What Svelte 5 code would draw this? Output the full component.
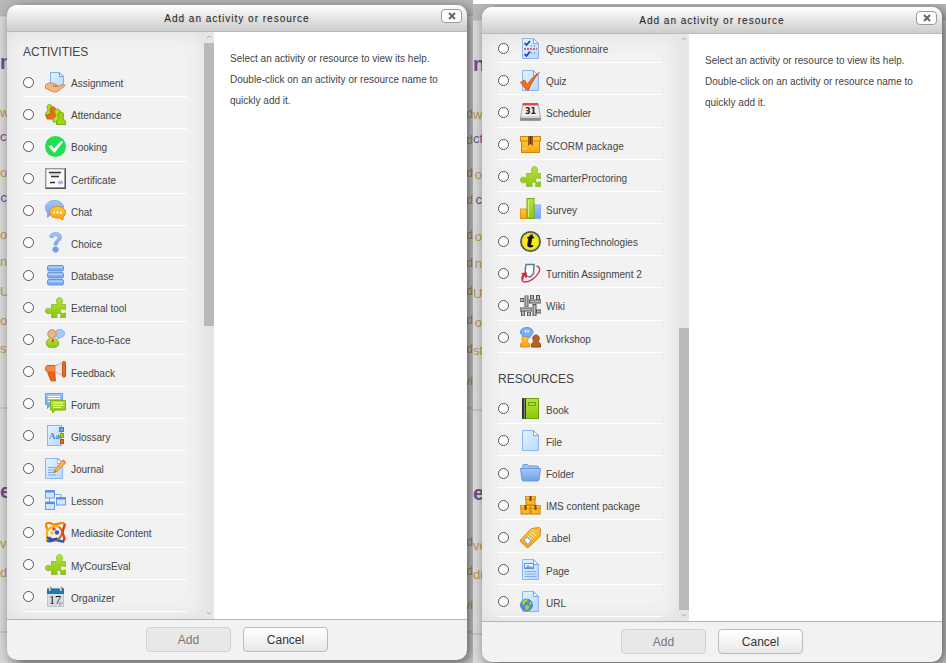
<script>
	// Course page text that shows in the gaps around each dialog
	const leftEdge = [
		{ text: 'n', top: 50, kind: 'heading' },
		{ text: 'w', top: 105 },
		{ text: 'ct', top: 129, kind: 'visited' },
		{ text: 'o', top: 165 },
		{ text: 'c', top: 190, kind: 'visited' },
		{ text: 'o', top: 227 },
		{ text: 'n', top: 254 },
		{ text: 'U', top: 284 },
		{ text: 'o', top: 313 },
		{ text: 'st', top: 341 },
		{ text: 'e', top: 479, kind: 'heading' },
		{ text: 've', top: 536 },
		{ text: 'di', top: 565 }
	];
	const rightEdge = [
		{ text: 'd', top: 106 },
		{ text: 'd', top: 132 },
		{ text: 'd', top: 165 },
		{ text: 'd', top: 192 },
		{ text: 'd', top: 227 },
		{ text: 'd', top: 255 },
		{ text: 'd', top: 283 },
		{ text: 'd', top: 312 },
		{ text: 'd', top: 341 },
		{ text: 'vi', top: 373 },
		{ text: 'd', top: 534 },
		{ text: 'd', top: 563 },
		{ text: 'vi', top: 597 }
	];

	const dialogs = [
		{
			id: 'top',
			sections: [
				{
					title: 'ACTIVITIES',
					items: [
						['assignment', 'Assignment'],
						['attendance', 'Attendance'],
						['booking', 'Booking'],
						['certificate', 'Certificate'],
						['chat', 'Chat'],
						['choice', 'Choice'],
						['database', 'Database'],
						['puzzle', 'External tool'],
						['face', 'Face-to-Face'],
						['feedback', 'Feedback'],
						['forum', 'Forum'],
						['glossary', 'Glossary'],
						['journal', 'Journal'],
						['lesson', 'Lesson'],
						['mediasite', 'Mediasite Content'],
						['puzzle', 'MyCoursEval'],
						['organizer', 'Organizer']
					]
				}
			]
		},
		{
			id: 'bottom',
			sections: [
				{
					title: '',
					items: [
						['questionnaire', 'Questionnaire'],
						['quiz', 'Quiz'],
						['scheduler', 'Scheduler'],
						['scorm', 'SCORM package'],
						['puzzle', 'SmarterProctoring'],
						['survey', 'Survey'],
						['turning', 'TurningTechnologies'],
						['turnitin', 'Turnitin Assignment 2'],
						['wiki', 'Wiki'],
						['workshop', 'Workshop']
					]
				},
				{
					title: 'RESOURCES',
					items: [
						['book', 'Book'],
						['file', 'File'],
						['folder', 'Folder'],
						['ims', 'IMS content package'],
						['label', 'Label'],
						['page', 'Page'],
						['url', 'URL']
					]
				}
			]
		}
	];

	let selected = $state({ top: '', bottom: '' });
</script>

{#snippet sheet()}
	<path d="M2.5.5h11l5 5v15h-16z" fill="url(#sheet)" stroke="#8db4ee" />
	<path d="M13.5.5v5h5z" fill="#eef7ff" stroke="#7fa9ea" />
{/snippet}

{#snippet person(fill, stroke)}
	<path
		d="M5 1c2 0 3.200 1.500 3.200 3.500 0 1.500-.8 2.300-1 3 .2 1 2.300 1 2.300 3.500v2h-9v-2c0-2.500 2.100-2.500 2.300-3.500-.2-.7-1-1.500-1-3C1.800 2.500 3 1 5 1z"
		{fill}
		{stroke}
	/>
{/snippet}

{#snippet box()}
	<rect x=".5" y="2.500" width="9" height="6.500" fill="#ffb51c" stroke="#c97b08" />
	<rect x="0" y=".5" width="10" height="2.500" fill="#ffc63c" stroke="#c97b08" stroke-width=".7" />
	<path d="M4 0h2v5H4z" fill="#80400c" />
{/snippet}

{#snippet icon(name)}
	<svg class="icon" viewBox="0 0 21 21" aria-hidden="true">
		{#if name === 'assignment'}
			<path d="M5.500.5h9l4 4v10h-13z" fill="url(#sheet)" stroke="#7fb0ee" />
			<path d="M14.500.5v4h4z" fill="#eef7ff" stroke="#6ea0e8" />
			<path
				d="M.5 13c2-2 4-2.500 6-2l5 1.500c1 .5.500 1.600-.5 1.600H8l5 .4 5-2c1.600-.3 2.700.7 1.500 1.700l-6 4.500c-2 1.500-4 1.700-6 1l-3-1.500-4-2z"
				fill="#f1b981"
				stroke="#b87a42"
				stroke-width=".8"
			/>
		{:else if name === 'attendance'}
			<path d="M4.500.5c2 0 3 1.500 2.500 3.500L6.500 6 10 8v5H1l-.5-4L3 7 2 3.500C2 1.500 3 .5 4.500.5z" fill="#a8d818" stroke="#6fa60a" stroke-width=".8" />
			<path d="M8 3c2 0 3 1.500 2.500 3.500L10 9l3 2v4H2v-1.500l-1-2 2-.5 3-1.500L5.500 6C5.500 4 6.500 3 8 3z" fill="#f26a22" stroke="#c44708" stroke-width=".8" />
			<path d="M12 5c2.500 0 3.500 1.500 3 4l-1 2 4 2v5H8v-3l3-3-1.500-4C9.500 6 10.500 5 12 5z" fill="#b4e02c" stroke="#6fa60a" stroke-width=".8" />
			<path d="M15.500 8c2.500 0 3.500 1.500 3 4l-.8 2.500L20.500 17v3.500h-9V17l2.500-2.500-1-3C13 9 14 8 15.500 8z" fill="#a4d414" stroke="#659a08" stroke-width=".8" />
		{:else if name === 'booking'}
			<circle cx="10.500" cy="10.500" r="10.500" fill="#1fe04f" />
			<path d="M3.500 10.500 6.500 9l2.500 3.500L16 5l2 1-8.500 11z" fill="#fff" />
		{:else if name === 'certificate'}
			<rect x=".7" y=".7" width="19.600" height="19.600" fill="#fafafa" stroke="#999" stroke-width="1.400" />
			<path d="M20.300.7v19.600H.7" fill="none" stroke="#555" stroke-width="1.400" />
			<path d="M4 4.500h12M6 8.500h8M5 14.500h5" stroke="#333" stroke-width="1.300" />
			<path d="M5 6h10" stroke="#999" stroke-width=".7" />
			<ellipse cx="15.500" cy="14.500" rx="2.700" ry="2" fill="#b9b2e8" />
		{:else if name === 'chat'}
			<path d="M9.500.5c5 0 9 3 9 7s-4 7-9 7l-4 .2-3 3 .2-4.700C1.200 11.500.5 9.500.5 7.500c0-4 4-7 9-7z" fill="url(#blue)" stroke="#7ea9ea" />
			<path d="M12.500 6.500c4.500 0 8 2.500 8 6 0 2-1 3.500-2.500 4.500v3L15 18H12.500c-4.500 0-8-2.500-8-5.500 0-3.500 3.500-6 8-6z" fill="url(#gold)" stroke="#e88c05" />
			<path d="M8 11.500h2v2H8zM11.500 11.500h2v2h-2zM15 11.500h2v2h-2z" fill="#fff" />
		{:else if name === 'choice'}
			<path d="M4.500 5c.5-3 3-4.500 6-4.500 3.500 0 6 2 6 4.800 0 3.500-4 4-4.500 7.700h-3c0-4.500 4-5 4-7.300 0-1.200-1-2-2.500-2S8.200 4.500 8 6z" fill="url(#blue)" stroke="#7ea9ea" stroke-width=".8" />
			<circle cx="10.500" cy="17.500" r="2.800" fill="#6d9de6" stroke="#85b0f0" />
		{:else if name === 'database'}
			{#each [0.5, 7.5, 14.5] as y}
				<rect x="2.500" {y} width="16" height="5.500" rx="1.500" fill="url(#blue)" stroke="#6796e2" />
				<path d="M4 {y + 2}h13" stroke="#b4d0fa" />
			{/each}
		{:else if name === 'puzzle'}
			<path
				d="M6.500 7.500H12c.8-.5-.5-1.500-.5-3.500 0-2 1.200-3.500 3-3.500s3 1.500 3 3.500c0 2-1.300 3-.5 3.500h3.500v5c-.5.800-1.300-.5-3-.5-1.500 0-2 1-2 2.200 0 1.300.7 2.300 2 2.300 1.500 0 2.500-1 3-.5v4.500h-5c-.5-.7.600-1.500.3-2.800-.2-1-1-1.500-2-1.500s-2 .6-2 1.700c0 1.100 1 2 .4 2.600H6.500V16c-.7-.5-1.500.8-3 .8C1.500 16.800.5 15.600.5 14s1-2.800 3-2.800c1.500 0 2.300 1.300 3 .6z"
				fill="url(#green)"
				stroke="#84b92a"
				stroke-width=".8"
			/>
		{:else if name === 'face'}
			<path d="M14.500.5c3 0 5 1.500 5 4 0 2-1.500 3.500-4 4L13 10V8c-2-.5-3-2-3-3.500 0-2.500 2-4 4.500-4z" fill="#a5cbfa" stroke="#7eaef0" />
			<path d="M1.500 15c0-4 2-6 6-6s6 2 6 6c0 2.500-3 3.500-6 3.500s-6-1-6-3.500z" fill="url(#green)" stroke="#76ad18" />
			<path d="M5 9h5l-2 5z" fill="#f6f6f6" />
			<path d="M7 9.500h1.500l.7 2-1.200 3-1.500-3z" fill="#e04f18" />
			<circle cx="7" cy="5" r="4.200" fill="#e6b884" stroke="#c28b54" />
		{:else if name === 'feedback'}
			<path d="M3 9h7v4l.5 7H6c-1-2-2-5-3-7z" fill="#e9631a" stroke="#c74b0c" stroke-width=".7" />
			<path d="M3 4.500h9V11H3C1.500 11 .5 9.500.5 7.700S1.500 4.500 3 4.500z" fill="#f58a45" stroke="#d95913" />
			<path d="M10.500 4.500 18 1.500v13l-7.500-3z" fill="#e4e4e4" stroke="#bbb" />
			<rect x="17.500" y=".5" width="3" height="15.500" rx="1" fill="#ee6a20" stroke="#cf500f" />
		{:else if name === 'forum'}
			<path d="M.5.500h17v11h-12l-3 4v-4h-2z" fill="url(#blue)" stroke="#6f9be2" />
			<path d="M3 3.500h12M3 5.500h12M3 8.500h3" stroke="#fff" />
			<path d="M5.500 7.500h15v9.500H10l-2.500 3V17h-2z" fill="url(#green)" stroke="#7db50d" />
			<path d="M8 10h10M8 12.500h10M8 14.500h8" stroke="#eaffb0" />
		{:else if name === 'glossary'}
			<rect x="2.500" y=".5" width="14" height="20" fill="url(#sheet)" stroke="#8db4ee" />
			<rect x="14.500" y="2.500" width="4" height="4" fill="#6fa2ee" stroke="#4a7dcc" />
			<rect x="15.500" y="8.500" width="3" height="4" fill="#9bd818" stroke="#74a80e" />
			<rect x="15.500" y="14.500" width="3" height="4" fill="#f26a1c" stroke="#c74a08" />
			<text x="4" y="14" class="serif" font-size="9" font-weight="bold" fill="#4a7fd4">Aa</text>
		{:else if name === 'journal'}
			<path d="M.5.500h13l4 4v16H.5z" fill="url(#sheet)" stroke="#8db4ee" />
			<path d="M12.500.500v5h5z" fill="#fff" stroke="#8db4ee" />
			<path d="M3 9.500h8M3 12h7M3 14.500h7M3 17h8" stroke="#7fa7e2" />
			<path d="M17.500 2.500 20.500 5 12.500 13l-3.500 1.500 1.500-3.500z" fill="#ffb347" stroke="#c87618" stroke-width=".8" />
			<path d="m17.500 2.500 1-1 2.500 2.500-.8 1z" fill="#ee6a50" />
			<path d="m9 14.500.6-1.500 1 .8z" fill="#333" />
		{:else if name === 'lesson'}
			<path d="M9 4.500h7V8M4.500 7v5" stroke="#83a9df" fill="none" />
			{#each [[0.5, 0.5], [11.5, 7.5], [0.5, 12]] as [x, y]}
				<rect {x} {y} width="9" height="7.500" fill="#cbe6fc" stroke="#6c9be6" />
				<path d="M{x} {y + 1}h9" stroke="#5b8de0" stroke-width="2" />
			{/each}
		{:else if name === 'mediasite'}
			<path d="M3 8C-1 2 2-1 7 2c5 2 8-2 12-1" fill="none" stroke="#f28a10" stroke-width="2.400" />
			<path d="M19.500 1.500c1 4-4 7-1 12 1.500 3 1 5-1 6" fill="none" stroke="#dd3a1a" stroke-width="2.400" />
			<path d="M1 19c3-3-1-8 2-11 3-4 8-5 11-3" fill="none" stroke="#f6b51c" stroke-width="2.200" />
			<path d="M2 18.500c4 2 6-1 9-.5 3 0 5 2 8 1.500" fill="none" stroke="#2a5cc0" stroke-width="2.600" />
			<path d="M4 15c4 4 10 3 12-1 2-3 1-7-2-9" fill="none" stroke="#e65a18" stroke-width="2" />
			<path d="M2 15c4 4 8 3 10 1" fill="none" stroke="#204ca8" stroke-width="1.800" />
			<circle cx="9" cy="7" r="1.700" fill="#e64218" />
			<circle cx="12" cy="10.500" r="2.200" fill="#2a5cc0" />
			<circle cx="7" cy="11" r="1.700" fill="#f9bd18" />
		{:else if name === 'organizer'}
			<rect x="2.500" y="2.500" width="16" height="18" fill="#dcdcdc" stroke="#c5c5c5" />
			<path d="M2 2.500h17V8H2z" fill="#177bb0" />
			<path d="M5 0v5M16 0v5" stroke="#ddd" stroke-width="2" />
			<path d="M6 1v4M17 1v4" stroke="#555" stroke-width=".8" />
			<path d="M14 20.500v-4h4.500z" fill="#aaa" />
			<text x="10" y="18" class="serif" font-size="12" text-anchor="middle" fill="#111">17</text>
		{:else if name === 'questionnaire'}
			{@render sheet()}
			<path d="m4.500 5 2 2 3.500-4M4.500 16l2 2L10 13.500" fill="none" stroke="#2b36c4" stroke-width="1.700" />
			<path d="M4 11h13" stroke="#e23a4a" stroke-width="1.500" stroke-dasharray="2 1" />
			<path d="M11 8h6M11 15h6" stroke="#4a62c8" stroke-dasharray="1 2" />
		{:else if name === 'quiz'}
			{@render sheet()}
			<path d="M.5 12.500 4.500 10l3 4.500C10.500 9 15 5 19.500 2.500c-4 4-8 10-11 17.500H6.500c-2-2.500-3.500-5-6-7.500z" fill="#f36f21" stroke="#bf4a0b" stroke-width=".8" />
		{:else if name === 'scheduler'}
			<path d="m3 1.500h15l2.500 14v3h-20v-3z" fill="#ededed" stroke="#aaa" />
			<path d="M.5 15h20v3.500h-20z" fill="#8b8b8b" />
			<path d="M1.500 14h18l.5 2H1z" fill="#d4d4d4" />
			<path d="M3 1h15v2.500H2.500z" fill="#ea4646" />
			<text x="10.500" y="11.500" class="sans" font-size="8" font-weight="bold" text-anchor="middle" fill="#222">31</text>
		{:else if name === 'scorm'}
			<rect x="1.500" y="6.500" width="18" height="12" fill="url(#gold)" stroke="#cf860b" />
			<rect x=".5" y="2.500" width="20" height="4.500" fill="#ffc437" stroke="#cf860b" />
			<path d="M8 2h5v10l-2.500-2L8 12z" fill="#9b5714" />
			<path d="M10 2h1v8h-1z" fill="#603008" />
			<path d="M3 14.500h4" stroke="#ffe185" />
		{:else if name === 'survey'}
			<rect x=".5" y="11" width="6.500" height="9.500" fill="url(#gold)" stroke="#e79a18" />
			<rect x="14" y="7" width="6.500" height="13.500" fill="url(#blue)" stroke="#84aeee" />
			<rect x="7" y=".5" width="7" height="20" fill="url(#green)" stroke="#79ae0e" />
			<path d="M8.500 2v17" stroke="#d2f277" />
		{:else if name === 'turning'}
			<circle cx="10.500" cy="10.500" r="9.600" fill="#f8ec18" stroke="#555" stroke-width="1.800" />
			<circle cx="10.500" cy="10.500" r="8.200" fill="none" stroke="#d8cf3a" />
			<text x="10" y="16" class="serif" font-size="21" font-weight="bold" font-style="italic" text-anchor="middle" fill="#111" stroke="#111">t</text>
		{:else if name === 'turnitin'}
			<path d="M6 1.500h8l-.5 9-3 3.500-2.500-.5-3-1L5.500 5z" fill="#fff" stroke="#527e9c" stroke-width="1.500" />
			<path d="M16.500 3c3.500.5 4 3.500 2 7-3 5-9 9-13.500 9-3 0-3.500-2-2.500-5" fill="none" stroke="#e22a44" stroke-width="1.300" />
			<path d="m1 10 6-.5-.5 6z" fill="#e91c36" />
			<path d="M4 11.500c-1.500 1.500-2 3.500-1 5" stroke="#e91c36" fill="none" stroke-width="2" />
		{:else if name === 'wiki'}
			<g fill="none" stroke="#555" stroke-width="4">
				<path d="M6.500.5V12M14.500 9v12M0 14.500h12M9 6.500h12M3 21v-5M18 0v5M0 5h4M16 16.500h5M12 0v4M9 17v4" />
			</g>
			<g fill="none" stroke="#b9b9b9" stroke-width="2">
				<path d="M6.500 1v10.500M14.500 10v10.500M.5 14.500h11M10 6.500h10.500M3 20.500v-4M18 1v3.500M.5 5h3M17 16.500h3.500M12 .5v3M9 17.500v3" />
			</g>
		{:else if name === 'workshop'}
			<g transform="translate(0 7)">{@render person('url(#gold)', '#dc920e')}</g>
			<g transform="translate(11 7)">{@render person('#b8641e', '#8c470f')}</g>
			<path d="M7 .5c3.500 0 6 2 6 4.500 0 1.800-1.200 3.300-3 4v2L8 9.500C3.500 10 .5 8 .5 5S3.500.5 7 .5z" fill="#7faef2" stroke="#6294e2" />
			<path d="M5.500 3v2.500M8 3v2.500" stroke="#fff" stroke-width="1.300" />
		{:else if name === 'book'}
			<rect x="5" y=".5" width="13.500" height="20" fill="url(#green)" stroke="#6f9f0c" />
			<path d="M2 0h4v21H2z" fill="#333" />
			<path d="M4 0h1v21H4z" fill="#888" />
			<rect x="8.500" y="4.500" width="7" height="3" fill="none" stroke="#6fa40e" />
		{:else if name === 'file'}
			{@render sheet()}
		{:else if name === 'folder'}
			<path d="M2.500 3.500v-1l1-1h4l1.500 1.500h8.500l1 1V8h-16z" fill="#9dc0f5" stroke="#7199dc" />
			<path d="M.5 5.500h20l-1.500 11.500-1 1H3l-1-1z" fill="url(#blue)" stroke="#6c98e2" />
		{:else if name === 'ims'}
			<g transform="translate(5.500 1)">{@render box()}</g>
			<g transform="translate(.5 10)">{@render box()}</g>
			<g transform="translate(10.500 10)">{@render box()}</g>
		{:else if name === 'label'}
			<path d="m.5 13 11-11.500 8-1 1 1-.5 8L8.500 20.500H7L.5 14.500z" fill="url(#gold)" stroke="#d18a10" />
			<path d="m4 13 3-3 4 4-3 3.500z" fill="#fff" stroke="#6ea0e0" />
			<path d="m8 9 4 4M10 7l4 4M12 5l4 4" stroke="#ffeab0" />
			<circle cx="17.500" cy="3.500" r="1.300" fill="#fff" stroke="#c47d0c" stroke-width=".7" />
		{:else if name === 'page'}
			{@render sheet()}
			<rect x="4.500" y="4.500" width="9" height="5" fill="#e8f6ff" stroke="#5f93e0" />
			<path d="m5 9 3-3 2 2 1.500-1 1.500 2z" fill="#6b9de8" />
			<path d="M4.500 12.500h12M4.500 15h12M4.500 17.500h12" stroke="#86aee8" />
		{:else if name === 'url'}
			{@render sheet()}
			<circle cx="6.500" cy="14" r="6" fill="#5289dc" stroke="#3e74c8" stroke-width=".8" />
			<path d="M2 11c1.500-2 3.500-3 6-2.500l-1 2-2 .5v2l-2 1zM6 14l3.500 1-1 3-2 1.500L5 16zM9.500 10.500l2 1v3l-2-1.500z" fill="#a3dc22" />
		{/if}
	</svg>
{/snippet}

{#snippet strip(side, fragments)}
	<div class="strip {side}" aria-hidden="true">
		{#each fragments as f}
			<span class={f.kind} style="top: {f.top}px">{f.text}</span>
		{/each}
	</div>
{/snippet}

<svg class="defs" aria-hidden="true">
	<defs>
		<linearGradient id="sheet" x1="0" y1="0" x2="1" y2="1">
			<stop offset="0" stop-color="#e2f3fe" />
			<stop offset="1" stop-color="#b5dafb" />
		</linearGradient>
		<linearGradient id="blue" x1="0" y1="0" x2="0" y2="1">
			<stop offset="0" stop-color="#a5c8fa" />
			<stop offset="1" stop-color="#709fe9" />
		</linearGradient>
		<linearGradient id="gold" x1="0" y1="0" x2="0" y2="1">
			<stop offset="0" stop-color="#ffc93e" />
			<stop offset="1" stop-color="#fba20c" />
		</linearGradient>
		<linearGradient id="green" x1="0" y1="0" x2="0" y2="1">
			<stop offset="0" stop-color="#b6e33a" />
			<stop offset="1" stop-color="#8cc80c" />
		</linearGradient>
	</defs>
</svg>

<main>
	{#each dialogs as dialog}
		<div class="scene {dialog.id}">
			{@render strip('left', leftEdge)}
			{#if dialog.id === 'top'}
				{@render strip('right', rightEdge)}
			{/if}
			<section class="dialog" role="dialog" aria-labelledby="title-{dialog.id}">
				<header>
					<h1 id="title-{dialog.id}">Add an activity or resource</h1>
					<button class="close" aria-label="Close">
						<svg viewBox="0 0 8 8"><path d="m1 1 6 6M7 1 1 7" /></svg>
					</button>
				</header>

				<div class="body">
					<div class="chooser">
						{#each dialog.sections as section}
							{#if section.title}
								<h2>{section.title}</h2>
							{/if}
							{#each section.items as [name, text]}
								<label class="option">
									<input
										type="radio"
										name="module-{dialog.id}"
										value={text}
										bind:group={selected[dialog.id]}
									/>
									{@render icon(name)}
									<span>{text}</span>
								</label>
							{/each}
						{/each}
					</div>
					<div class="scrollbar" aria-hidden="true">
						<svg viewBox="0 0 8 5"><path d="m1 4 3-3 3 3" /></svg>
						<div class="track"><div class="thumb"></div></div>
						<svg viewBox="0 0 8 5"><path d="m1 1 3 3 3-3" /></svg>
					</div>
					<p class="help">
						Select an activity or resource to view its help. Double-click on an activity or resource
						name to quickly add it.
					</p>
				</div>

				<footer>
					<button disabled={!selected[dialog.id]}>Add</button>
					<button>Cancel</button>
				</footer>
			</section>
		</div>
	{/each}
</main>

<style>
	:global(body) {
		background: #fff;
		font-family: 'Liberation Sans', Arial, sans-serif;
		font-size: 10px;
		color: #444;
	}

	main {
		display: flex;
		min-height: 100vh;
	}

	.defs {
		position: absolute;
		width: 0;
		height: 0;
	}

	.scene {
		position: relative;
		flex: 1;
		display: flex;
		box-sizing: border-box;
		overflow: hidden;
		background: linear-gradient(#b9b9b9 16px, #dadada 17px);
	}

	.scene.top {
		padding: 5px 6px 3px 7px;
	}

	.scene.bottom {
		margin-top: 4px;
		padding: 3px 4px 1px 9px;
	}

	/* Page text behind the dialog */
	.strip {
		position: absolute;
		top: 0;
		bottom: 0;
		background:
			linear-gradient(#c6c6c6, #c6c6c6) 0 407px / 100% 2px no-repeat,
			linear-gradient(#c6c6c6, #c6c6c6) 0 631px / 100% 2px no-repeat;
		font-size: 13px;
		line-height: 16px;
		color: #b89548;
	}

	.strip.left {
		left: 0;
		width: 7px;
	}

	.bottom .strip.left {
		top: -2px;
		width: 9px;
	}

	.strip.right {
		right: 0;
		width: 6px;
		font-size: 12px;
	}

	.strip span {
		position: absolute;
		left: 0;
		min-width: 100%;
		text-align: right;
	}

	.strip.right span {
		left: auto;
		right: 0;
	}

	.strip .heading {
		font-size: 20px;
		line-height: 24px;
		font-weight: bold;
		color: #6c4f8e;
	}

	.strip .visited {
		color: #6c4f8e;
	}

	.dialog {
		position: relative;
		flex: 1;
		display: flex;
		flex-direction: column;
		overflow: hidden;
		border-radius: 10px;
		background: #f2f2f2;
		box-shadow: 4px 4px 14px rgba(0, 0, 0, 0.6);
	}

	header {
		display: flex;
		align-items: center;
		box-sizing: border-box;
		height: 27px;
		padding: 0 5px 0 26px;
		background: linear-gradient(#fff, #ccc);
		border-bottom: 1px solid #bbb;
	}

	h1 {
		flex: 1;
		margin: 0;
		font-size: 10px;
		font-weight: normal;
		letter-spacing: 1px;
		text-align: center;
		color: #222;
		text-shadow: 1px 1px 1px #ccc;
	}

	.close {
		display: flex;
		align-items: center;
		justify-content: center;
		width: 21px;
		height: 14px;
		margin-bottom: 4px;
		padding: 0;
		border: 1px solid #999;
		border-radius: 4px;
		background: #fff;
	}

	.close svg {
		width: 8px;
		height: 8px;
		stroke: #666;
		stroke-width: 2;
	}

	.body {
		flex: 1;
		display: flex;
		background: #fff;
	}

	.chooser {
		display: flex;
		flex-direction: column;
		box-sizing: border-box;
		width: 197px;
		padding: 0 16px 7px;
		overflow: hidden;
		background: #f2f2f2;
		box-shadow: inset 0 0 20px #ddd;
	}

	.bottom .chooser {
		padding-bottom: 4px;
	}

	/* Scrolled to the end, the first row is cut by the header */
	.bottom .option:first-child {
		margin-top: -3px;
	}

	h2 {
		margin: 0;
		padding: 12px 0 5px;
		font-size: 12px;
		line-height: 16px;
		font-weight: normal;
	}

	.option ~ h2 {
		padding-top: 18px;
	}

	.option {
		flex: 1;
		display: flex;
		align-items: center;
		box-sizing: border-box;
		width: 164px;
		padding-top: 3px;
		border-bottom: 1px solid #fff;
	}

	.option input {
		appearance: none;
		box-sizing: border-box;
		width: 11px;
		height: 11px;
		margin: 0 11px 0 0;
		border: 1px solid #555;
		border-radius: 50%;
		background: #fff;
	}

	.option input:checked {
		background: radial-gradient(#333 40%, #fff 50%);
	}

	.option span {
		padding-top: 4px;
		line-height: 12px;
	}

	.icon {
		width: 21px;
		height: 21px;
		margin-right: 5px;
	}

	.serif {
		font-family: 'Liberation Serif', serif;
	}

	.sans {
		font-family: 'DejaVu Sans', sans-serif;
	}

	.scrollbar {
		display: flex;
		flex-direction: column;
		align-items: center;
		width: 10px;
		background: #e6e6e6;
	}

	.scrollbar svg {
		width: 6px;
		height: 4px;
		padding: 3px 0 4px;
		fill: none;
		stroke: #999;
	}

	.track {
		flex: 1;
		display: flex;
		flex-direction: column;
		width: 100%;
	}

	.bottom .track {
		justify-content: flex-end;
	}

	.thumb {
		height: 50%;
		background: #b9b9b9;
	}

	.help {
		flex: 1;
		margin: 0;
		padding: 16px 16px 0;
		line-height: 21px;
	}

	footer {
		display: flex;
		justify-content: center;
		gap: 12px;
		padding: 7px 0 8px;
		border-top: 1px solid #b5b5b5;
	}

	footer button {
		width: 85px;
		height: 25px;
		padding: 0;
		border: 1px solid #bbb;
		border-radius: 4px;
		background: linear-gradient(#fff, #e8e8e8);
		font: 12px 'Liberation Sans', Arial, sans-serif;
		color: #333;
	}

	footer button:disabled {
		border-color: #d2d2d2;
		background: #e8e8e8;
		color: #777;
	}
</style>
